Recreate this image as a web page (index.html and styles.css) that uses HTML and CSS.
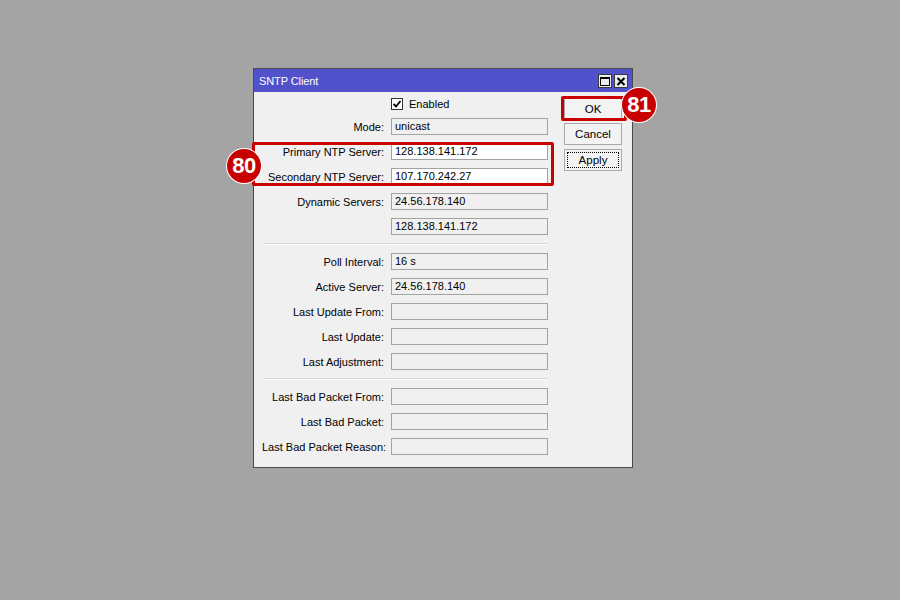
FILE: index.html
```html
<!DOCTYPE html>
<html>
<head>
<meta charset="utf-8">
<link rel="stylesheet" href="styles.css">
</head>
<body>
<div class="desk">
  <div class="window">
    <div class="titlebar">
      <span class="title">SNTP Client</span>
      <div class="tbtns">
        <span class="tbtn"><svg width="12" height="11" viewBox="0 0 12 11"><rect x="1.5" y="1.5" width="9" height="8" fill="none" stroke="#000" stroke-width="1"/><line x1="1.5" y1="2" x2="10.5" y2="2" stroke="#000" stroke-width="2"/></svg></span>
        <span class="tbtn"><svg width="12" height="11" viewBox="0 0 12 11"><path d="M2.5 2 L9.5 9 M9.5 2 L2.5 9" stroke="#000" stroke-width="2"/></svg></span>
      </div>
    </div>
    <div class="body">
      <div class="form">
        <div class="row cbrow">
          <span class="label"></span>
          <span class="check"><span class="cb"><svg width="10" height="10" viewBox="0 0 10 10"><path d="M1.5 5 L4 7.5 L8.5 2" fill="none" stroke="#000" stroke-width="1.8"/></svg></span>Enabled</span>
        </div>
        <div class="row"><span class="label">Mode:</span><span class="field">unicast</span></div>
        <div class="row"><span class="label">Primary NTP Server:</span><span class="field edit">128.138.141.172</span></div>
        <div class="row"><span class="label">Secondary NTP Server:</span><span class="field edit">107.170.242.27</span></div>
        <div class="row"><span class="label">Dynamic Servers:</span><span class="field">24.56.178.140</span></div>
        <div class="row"><span class="label"></span><span class="field">128.138.141.172</span></div>
        <div class="sep"></div>
        <div class="row"><span class="label">Poll Interval:</span><span class="field">16 s</span></div>
        <div class="row"><span class="label">Active Server:</span><span class="field">24.56.178.140</span></div>
        <div class="row"><span class="label">Last Update From:</span><span class="field"></span></div>
        <div class="row"><span class="label">Last Update:</span><span class="field"></span></div>
        <div class="row"><span class="label">Last Adjustment:</span><span class="field"></span></div>
        <div class="sep"></div>
        <div class="row"><span class="label">Last Bad Packet From:</span><span class="field"></span></div>
        <div class="row"><span class="label">Last Bad Packet:</span><span class="field"></span></div>
        <div class="row"><span class="label">Last Bad Packet Reason:</span><span class="field"></span></div>
      </div>
      <div class="buttons">
        <span class="btn">OK</span>
        <span class="btn">Cancel</span>
        <span class="btn focus"><span class="focusring">Apply</span></span>
      </div>
    </div>
    <div class="mark mark-servers"></div>
    <div class="mark mark-ok"></div>
    <div class="badge badge-80">80</div>
    <div class="badge badge-81">81</div>
  </div>
</div>
</body>
</html>
```

FILE: styles.css
```css
html, body {
  margin: 0;
  padding: 0;
}
body {
  background: #a4a4a4;
  width: 900px;
  height: 600px;
  overflow: hidden;
  font-family: "Liberation Sans", Arial, sans-serif;
  font-size: 11px;
  color: #000;
}
.desk {
  padding: 68px 0 0 253px;
}
.window {
  position: relative;
  width: 380px;
  height: 400px;
  box-sizing: border-box;
  border: 1px solid #4a4a4a;
  background: #f0f0f0;
  display: flex;
  flex-direction: column;
}
.titlebar {
  height: 23px;
  flex: none;
  background: #5151cb;
  display: flex;
  align-items: center;
  padding: 0 4px 0 5px;
  color: #fff;
}
.title {
  font-size: 11px;
  letter-spacing: -0.1px;
}
.tbtns {
  margin-left: auto;
  display: flex;
  gap: 2px;
  margin-top: 1px;
}
.tbtn {
  width: 14px;
  height: 14px;
  box-sizing: border-box;
  border: 1px solid #3a3a3a;
  background: #ececec;
  display: flex;
  align-items: center;
  justify-content: center;
}
.tbtn svg { display: block; }
.body {
  flex: 1;
  display: flex;
}
.form {
  padding: 5px 0 0 8px;
  display: flex;
  flex-direction: column;
  gap: 8px;
}
.row {
  display: flex;
  align-items: center;
  gap: 7px;
  height: 17px;
}
.cbrow {
  height: 13px;
}
.label {
  width: 122px;
  flex: none;
  text-align: right;
  white-space: nowrap;
}
.field {
  width: 157px;
  height: 17px;
  box-sizing: border-box;
  border: 1px solid #a3a3a3;
  padding-left: 3px;
  line-height: 15px;
  background: #f0f0f0;
  white-space: nowrap;
}
.field.edit {
  background: #fff;
}
.check {
  display: flex;
  align-items: center;
  gap: 6px;
}
.cb {
  width: 12px;
  height: 12px;
  box-sizing: border-box;
  border: 1px solid #333;
  background: #fff;
  display: flex;
  align-items: center;
  justify-content: center;
}
.cb svg { display: block; }
.sep {
  margin-left: 1px;
  width: 285px;
  border-top: 1px solid #d6d6d6;
  border-bottom: 1px solid #fff;
}
.buttons {
  margin-left: 16px;
  padding-top: 6px;
  display: flex;
  flex-direction: column;
  gap: 3px;
}
.btn {
  width: 58px;
  height: 22px;
  box-sizing: border-box;
  border: 1px solid #a8a8a8;
  background: #f3f3f3;
  display: flex;
  align-items: center;
  justify-content: center;
  font-size: 11.5px;
}
.btn.focus {
  padding: 2px;
  margin-top: 1px;
}
.focusring {
  flex: 1;
  align-self: stretch;
  border: 1px dotted #000;
  display: flex;
  align-items: center;
  justify-content: center;
}
.mark {
  position: absolute;
  border: 3px solid #c80000;
  border-radius: 2px;
  box-sizing: border-box;
}
.mark-servers {
  left: -2px;
  top: 73px;
  width: 302px;
  height: 44px;
}
.mark-ok {
  left: 307px;
  top: 27px;
  width: 66px;
  height: 25px;
}
.badge {
  position: absolute;
  width: 34px;
  height: 34px;
  border-radius: 50%;
  background: #c80000;
  box-shadow: 0 0 0 1px #fff;
  color: #fff;
  font-weight: bold;
  font-size: 22px;
  letter-spacing: -0.5px;
  display: flex;
  align-items: center;
  justify-content: center;
}
.badge-80 {
  left: -27px;
  top: 80px;
}
.badge-81 {
  left: 368px;
  top: 19px;
}
```
